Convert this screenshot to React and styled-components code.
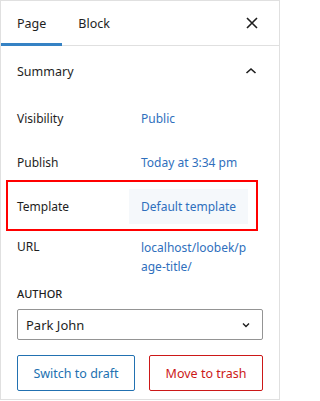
import styled, { createGlobalStyle } from 'styled-components';

const GlobalStyle = createGlobalStyle`
	* {
		box-sizing: border-box;
	}
	body {
		margin: 0;
		background: #fff;
		font-family: 'Noto Sans', 'Open Sans', sans-serif;
		font-size: 12px;
		color: #1e1e1e;
	}
`;

const Sidebar = styled.div`
	width: 280px;
	height: 400px;
	border: 1px solid #e0e0e0;
	display: flex;
	flex-direction: column;
	background: #fff;
`;

const TabBar = styled.div`
	display: flex;
	align-items: stretch;
	height: 45px;
	border-bottom: 1px solid #e0e0e0;
	padding-right: 11px;
`;

const Tab = styled.button`
	position: relative;
	border: none;
	background: none;
	padding: 0 16px;
	font: inherit;
	font-size: 12.5px;
	color: #1e1e1e;
	cursor: pointer;
	&::after {
		content: '';
		position: absolute;
		left: 0;
		right: 0;
		bottom: -1px;
		height: 3px;
		background: ${(p) => (p.active ? '#3582c4' : 'transparent')};
	}
`;

const Spacer = styled.div`
	flex: 1;
`;

const IconButton = styled.button`
	border: none;
	background: none;
	padding: 0;
	width: 32px;
	display: flex;
	align-items: center;
	justify-content: center;
	color: #1e1e1e;
	cursor: pointer;
`;

const Panel = styled.div`
	padding: 0 16px;
	display: flex;
	flex-direction: column;
`;

const PanelHeader = styled.div`
	height: 50px;
	display: flex;
	align-items: center;
	justify-content: space-between;
	font-size: 12.5px;
	margin-right: -4px;
`;

const Rows = styled.div`
	display: flex;
	flex-direction: column;
	gap: 8px;
	padding-top: 4px;
`;

const Row = styled.div`
	position: relative;
	display: grid;
	grid-template-columns: 112px 1fr;
	align-items: ${(p) => (p.top ? 'start' : 'center')};
	min-height: 36px;
	${(p) =>
		p.marked &&
		`
		&::after {
			content: '';
			position: absolute;
			left: -11px;
			right: 5px;
			top: -8px;
			bottom: -7px;
			border: 2px solid #ff0000;
			pointer-events: none;
		}
	`}
`;

const Label = styled.div`
	padding-top: ${(p) => (p.top ? '6px' : '0')};
`;

const Value = styled.div`
	color: #2f6fbd;
	padding: ${(p) => (p.top ? '6px 16px 0 12px' : '0 12px')};
	line-height: 19px;
	word-break: break-all;
	white-space: ${(p) => (p.top ? 'normal' : 'nowrap')};
	${(p) =>
		p.filled &&
		`
		background: #f5f8fb;
		height: 35px;
		display: flex;
		align-items: center;
		margin-right: 16px;
	`}
`;

const FieldLabel = styled.div`
	margin-top: 10px;
	font-size: 11px;
	font-weight: 500;
	text-transform: uppercase;
	line-height: 16px;
`;

const Select = styled.div`
	margin-top: 7px;
	height: 31px;
	border: 1px solid #949494;
	border-radius: 2px;
	display: flex;
	align-items: center;
	justify-content: space-between;
	padding: 0 8px;
	font-size: 13px;
`;

const Actions = styled.div`
	margin-top: 15px;
	display: flex;
	justify-content: space-between;
`;

const ActionButton = styled.button`
	height: 36px;
	width: ${(p) => p.w}px;
	background: #fff;
	border: 1px solid ${(p) => p.color};
	border-radius: 2px;
	color: ${(p) => p.color};
	font: inherit;
	font-size: 12.5px;
	cursor: pointer;
`;

const CloseIcon = () => (
	<svg width="24" height="24" viewBox="0 0 24 24">
		<path d="M7 7l10 10M17 7L7 17" stroke="currentColor" strokeWidth="1.6" fill="none" />
	</svg>
);

const ChevronUp = () => (
	<svg width="24" height="24" viewBox="0 0 24 24">
		<path d="M7.5 14l4.5-4 4.5 4" stroke="currentColor" strokeWidth="1.6" fill="none" />
	</svg>
);

const ChevronDown = () => (
	<svg width="16" height="16" viewBox="0 0 16 16">
		<path d="M5 6.5l3 3 3-3" stroke="currentColor" strokeWidth="1.4" fill="none" />
	</svg>
);

export default function App() {
	return (
		<>
			<GlobalStyle />
			<Sidebar>
				<TabBar>
					<Tab active>Page</Tab>
					<Tab>Block</Tab>
					<Spacer />
					<IconButton aria-label="Close">
						<CloseIcon />
					</IconButton>
				</TabBar>
				<Panel>
					<PanelHeader>
						<span>Summary</span>
						<IconButton>
							<ChevronUp />
						</IconButton>
					</PanelHeader>
					<Rows>
						<Row>
							<Label>Visibility</Label>
							<Value>Public</Value>
						</Row>
						<Row>
							<Label>Publish</Label>
							<Value>Today at 3:34 pm</Value>
						</Row>
						<Row marked>
							<Label>Template</Label>
							<Value filled>Default template</Value>
						</Row>
						<Row top>
							<Label top>URL</Label>
							<Value top>localhost/loobek/page-title/</Value>
						</Row>
					</Rows>
					<FieldLabel>Author</FieldLabel>
					<Select>
						<span>Park John</span>
						<ChevronDown />
					</Select>
					<Actions>
						<ActionButton w={118} color="#2271b1">
							Switch to draft
						</ActionButton>
						<ActionButton w={114} color="#cc1818">
							Move to trash
						</ActionButton>
					</Actions>
				</Panel>
			</Sidebar>
		</>
	);
}
